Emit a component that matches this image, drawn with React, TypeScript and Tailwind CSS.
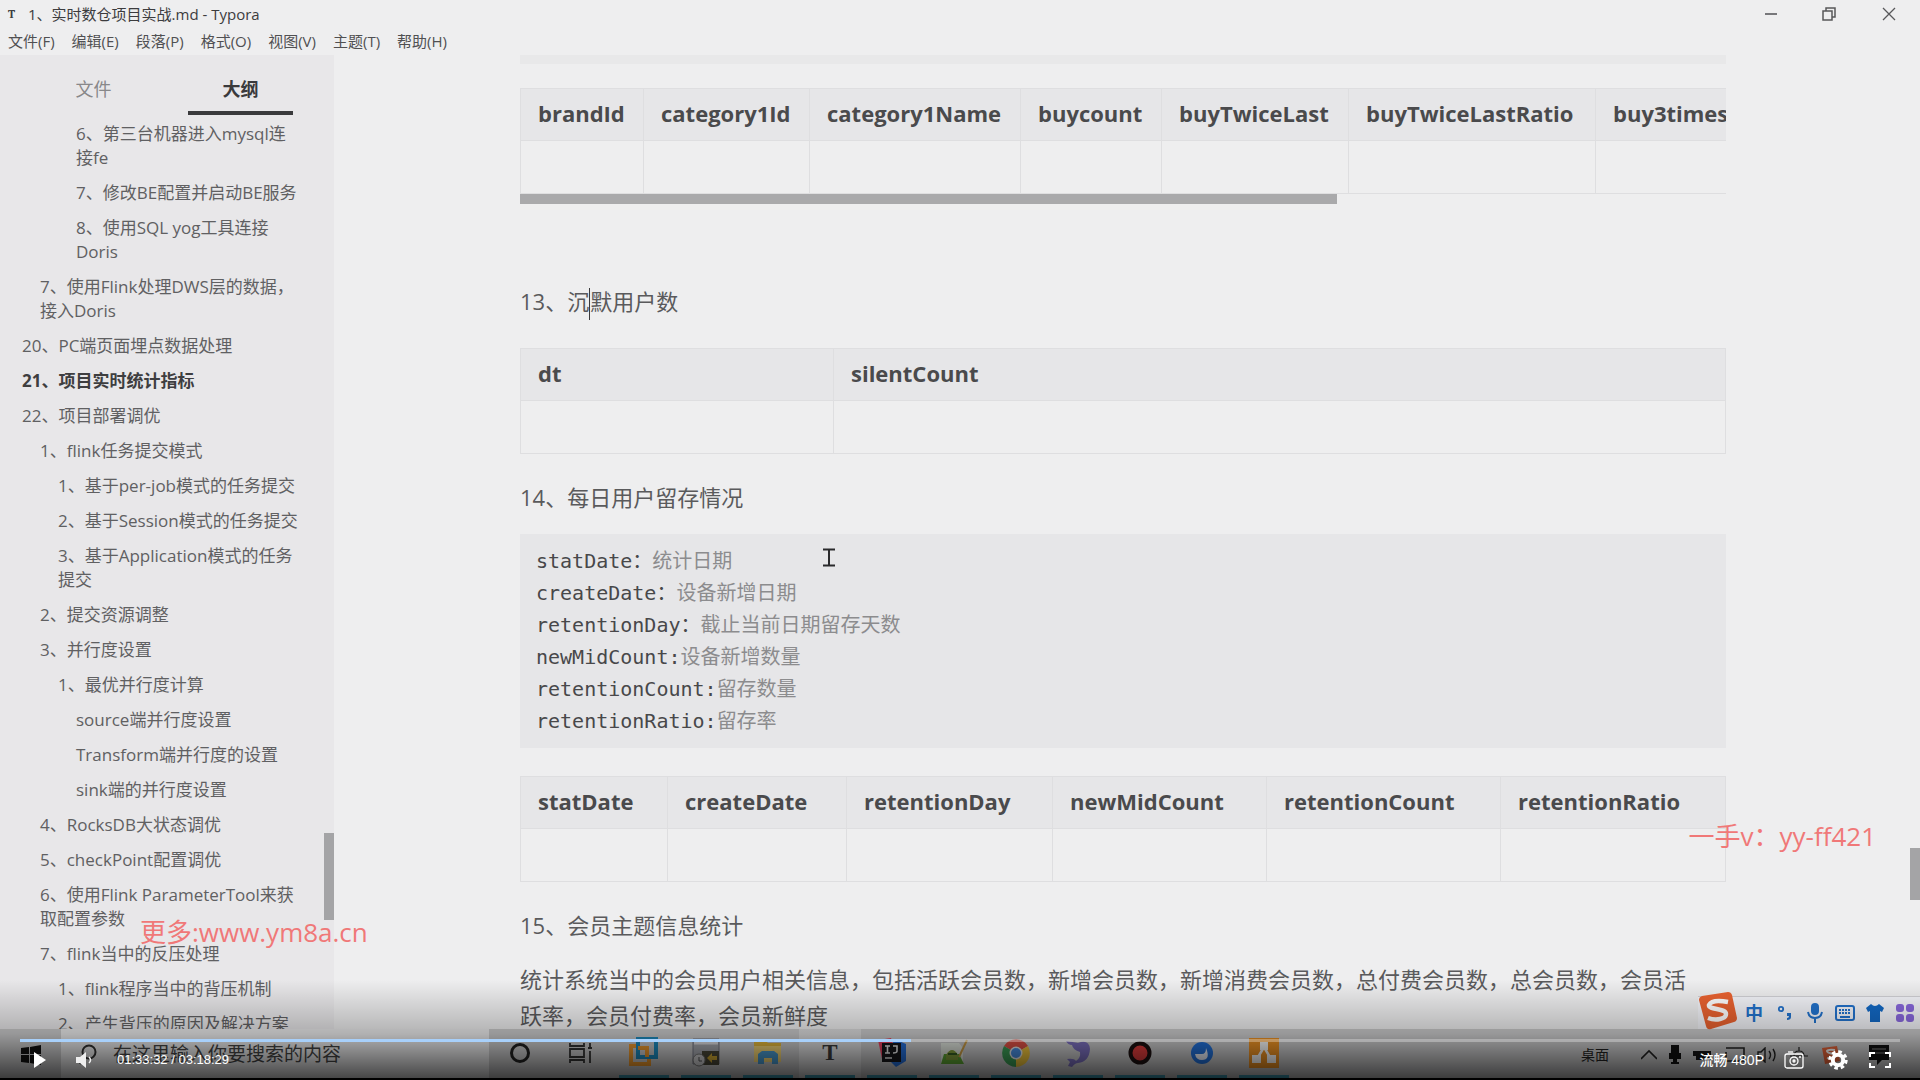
import { Fragment, type ReactNode } from "react";

type OutlineItem = {
  level: 0 | 1 | 2 | 3;
  lines: string[];
  active?: boolean;
};

type Column = {
  label: string;
  width: string;
};

const menus = ["文件(F)", "编辑(E)", "段落(P)", "格式(O)", "视图(V)", "主题(T)", "帮助(H)"];

const outline: OutlineItem[] = [
  { level: 3, lines: ["6、第三台机器进入mysql连", "接fe"] },
  { level: 3, lines: ["7、修改BE配置并启动BE服务"] },
  { level: 3, lines: ["8、使用SQL yog工具连接", "Doris"] },
  { level: 1, lines: ["7、使用Flink处理DWS层的数据，", "接入Doris"] },
  { level: 0, lines: ["20、PC端页面埋点数据处理"] },
  { level: 0, lines: ["21、项目实时统计指标"], active: true },
  { level: 0, lines: ["22、项目部署调优"] },
  { level: 1, lines: ["1、flink任务提交模式"] },
  { level: 2, lines: ["1、基于per-job模式的任务提交"] },
  { level: 2, lines: ["2、基于Session模式的任务提交"] },
  { level: 2, lines: ["3、基于Application模式的任务", "提交"] },
  { level: 1, lines: ["2、提交资源调整"] },
  { level: 1, lines: ["3、并行度设置"] },
  { level: 2, lines: ["1、最优并行度计算"] },
  { level: 3, lines: ["source端并行度设置"] },
  { level: 3, lines: ["Transform端并行度的设置"] },
  { level: 3, lines: ["sink端的并行度设置"] },
  { level: 1, lines: ["4、RocksDB大状态调优"] },
  { level: 1, lines: ["5、checkPoint配置调优"] },
  { level: 1, lines: ["6、使用Flink ParameterTool来获", "取配置参数"] },
  { level: 1, lines: ["7、flink当中的反压处理"] },
  { level: 2, lines: ["1、flink程序当中的背压机制"] },
  { level: 2, lines: ["2、产生背压的原因及解决方案"] },
];

const levelPadding = {
  0: "pl-[22px]",
  1: "pl-[40px]",
  2: "pl-[58px]",
  3: "pl-[76px]",
};

const brandColumns: Column[] = [
  { label: "brandId", width: "w-[123px]" },
  { label: "category1Id", width: "w-[166px]" },
  { label: "category1Name", width: "w-[211px]" },
  { label: "buycount", width: "w-[141px]" },
  { label: "buyTwiceLast", width: "w-[187px]" },
  { label: "buyTwiceLastRatio", width: "w-[247px]" },
  { label: "buy3timesLast", width: "w-[200px]" },
];

const silentColumns: Column[] = [
  { label: "dt", width: "w-[313px]" },
  { label: "silentCount", width: "w-auto" },
];

const retentionColumns: Column[] = [
  { label: "statDate", width: "w-[147px]" },
  { label: "createDate", width: "w-[179px]" },
  { label: "retentionDay", width: "w-[206px]" },
  { label: "newMidCount", width: "w-[214px]" },
  { label: "retentionCount", width: "w-[234px]" },
  { label: "retentionRatio", width: "w-auto" },
];

const fields = [
  ["statDate：", "统计日期"],
  ["createDate：", "设备新增日期"],
  ["retentionDay：", "截止当前日期留存天数"],
  ["newMidCount:", "设备新增数量"],
  ["retentionCount:", "留存数量"],
  ["retentionRatio:", "留存率"],
];

const DataTable = ({ columns, className }: { columns: Column[]; className: string }) => (
  <table className={`table-fixed border-collapse text-left ${className}`}>
    <thead className="bg-[#e6e6e8]">
      <tr className="h-[52px]">
        {columns.map((column) => (
          <th
            key={column.label}
            scope="col"
            className={`border border-[#dedee0] px-[17px] pb-[3px] text-[22px] font-bold whitespace-nowrap text-[#4a4a4c] ${column.width}`}
          >
            {column.label}
          </th>
        ))}
      </tr>
    </thead>
    <tbody>
      <tr className="h-[53px]">
        {columns.map((column) => (
          <td key={column.label} className="border border-[#dedee0]" />
        ))}
      </tr>
    </tbody>
  </table>
);

const TitleBar = () => (
  <header className="shrink-0 text-[#3c3c3e]">
    <div className="flex h-7 items-center justify-between pl-2">
      <div className="flex items-center gap-3 text-[15px]">
        <span className="flex h-5 w-2 items-center font-serif text-xs font-bold">T</span>
        <h1>1、实时数仓项目实战.md - Typora</h1>
      </div>
      <div className="flex">
        <button aria-label="最小化" className="flex h-7 w-[58px] items-center justify-center">
          <svg className="h-3 w-3" viewBox="0 0 12 12" stroke="#77777a" strokeWidth="2">
            <path d="M0 6h12" />
          </svg>
        </button>
        <button aria-label="还原" className="flex h-7 w-[58px] items-center justify-center">
          <svg className="h-[14px] w-[14px]" viewBox="0 0 14 14" fill="none" stroke="#58585a" strokeWidth="1.5">
            <path d="M1 4h9v9H1zM4 4V1h9v9h-3" />
          </svg>
        </button>
        <button aria-label="关闭" className="flex h-7 w-[62px] items-center justify-center">
          <svg className="h-[14px] w-[14px]" viewBox="0 0 14 14" stroke="#58585a" strokeWidth="1.3">
            <path d="M1 1l12 12M13 1L1 13" />
          </svg>
        </button>
      </div>
    </div>
    <nav className="flex h-[27px] items-center gap-[17px] pl-2 text-[15px] text-[#505052]">
      {menus.map((menu) => (
        <button key={menu}>{menu}</button>
      ))}
    </nav>
  </header>
);

const Sidebar = () => (
  <aside className="relative w-[334px] shrink-0 overflow-hidden bg-[#e8e7e9] text-[17px] text-[#606062]">
    <div className="flex px-[41px] pt-[11px] text-lg">
      <button className="h-[49px] w-[105px] pb-1 text-[#88888a]">文件</button>
      <button className="ml-[42px] h-[49px] w-[105px] border-b-[4px] border-[#3a3a3c] font-bold text-[#3a3a3c]">
        大纲
      </button>
    </div>
    <ul className="mt-[7px] space-y-[11px] leading-6 whitespace-nowrap">
      {outline.map((item) => (
        <li key={item.lines[0]} className={levelPadding[item.level]}>
          <a href="#" className={`block ${item.active ? "font-bold text-[#3e3e40]" : ""}`}>
            {item.lines.map((line, index) => (
              <Fragment key={line}>
                {index > 0 && <br />}
                {line}
              </Fragment>
            ))}
          </a>
        </li>
      ))}
    </ul>
    <div className="absolute top-[778px] right-0 h-[87px] w-[10px] bg-[#a4a4a6]" />
  </aside>
);

const Editor = () => (
  <main className="relative min-w-0 flex-1 overflow-hidden pr-[194px] pl-[186px] text-[22px] leading-9 text-[#5a5a5c]">
    <div className="h-[9px] bg-[#e8e8e9]" />

    <div className="mt-6 overflow-hidden">
      <DataTable columns={brandColumns} className="w-[1275px]" />
      <div className="h-[10px] w-[817px] max-w-full bg-[#a9a9ab]" />
    </div>

    <p className="mt-[79px]">
      13、沉
      <span className="inline-block h-8 w-px bg-[#3a3a3c] align-middle" />
      默用户数
    </p>
    <DataTable columns={silentColumns} className="mt-7 w-full" />

    <p className="mt-[25px]">14、每日用户留存情况</p>
    <div className="relative mt-[19px]">
      <pre className="bg-[#e6e6e8] px-4 py-[11px] font-['DejaVu_Sans_Mono','Noto_Sans_CJK_SC',monospace] text-xl leading-8 text-[#48484a]">
        {fields.map(([name, description]) => (
          <div key={name}>
            {name}
            <span className="text-[#8c8c8e]">{description}</span>
          </div>
        ))}
      </pre>
      <svg
        className="absolute top-[14px] left-[303px] h-[19px] w-3"
        viewBox="0 0 12 19"
        fill="none"
        stroke="#2a2a2c"
        strokeWidth="2"
      >
        <path d="M0 1.5h12M0 17.5h12M6 1v17" />
      </svg>
    </div>

    <DataTable columns={retentionColumns} className="mt-7 w-full" />

    <p className="mt-[25px]">15、会员主题信息统计</p>
    <p className="mt-[18px]">
      统计系统当中的会员用户相关信息，包括活跃会员数，新增会员数，新增消费会员数，总付费会员数，总会员数，会员活
      <br />
      跃率，会员付费率，会员新鲜度
    </p>
    <div className="absolute top-[793px] right-0 h-[52px] w-[10px] bg-[#a4a4a6]" />
  </main>
);

const AppIcon = ({ children }: { children: ReactNode }) => (
  <svg className="h-8 w-8" viewBox="0 0 32 32" fill="none">
    {children}
  </svg>
);

const taskIcons: { name: string; running: boolean; icon: ReactNode }[] = [
  {
    name: "Cortana",
    running: false,
    icon: <circle cx="16" cy="16" r="8.5" stroke="#222" strokeWidth="3" />,
  },
  {
    name: "任务视图",
    running: false,
    icon: (
      <path
        d="M4 6v3h14V6M4 26v-3h14v3M4 12h14v8H4zM24 6v4M24 14v12M22 11h4"
        stroke="#333"
        strokeWidth="1.8"
      />
    ),
  },
  {
    name: "VMware",
    running: true,
    icon: (
      <g strokeWidth="4">
        <path d="M12 9H3v18h18v-8" stroke="#f09a2c" />
        <path d="M10 2h18v18H10z" stroke="#1e8cc0" />
        <path d="M10 11h9v9" stroke="#f09a2c" />
      </g>
    ),
  },
  {
    name: "远程终端",
    running: true,
    icon: (
      <>
        <path d="M3 2h26v25H3z" fill="#a9abb2" stroke="#777985" />
        <path d="M4 6h24" stroke="#e0e0e4" strokeWidth="3" />
        <path d="M12 14h17v14H12z" fill="#4a4838" />
        <path d="M17 21l5-5v3h5v4h-5v3z" fill="#cfa832" />
        <circle cx="9" cy="23" r="6" fill="#d0d0d2" stroke="#777" />
        <path d="M9 20v4h3" stroke="#555" />
      </>
    ),
  },
  {
    name: "文件资源管理器",
    running: true,
    icon: (
      <>
        <path d="M2 3h11l3 3h13v19H2z" fill="#e5b93c" />
        <path d="M2 9h27v16H2z" fill="#f5d675" />
        <path d="M6 27V17l4-3h12l4 3v10h-6v-6h-8v6z" fill="#4a9bd0" />
      </>
    ),
  },
  {
    name: "Typora",
    running: true,
    icon: (
      <text x="16" y="23" textAnchor="middle" fontSize="23" fontWeight="bold" fontFamily="Liberation Serif, serif" fill="#3a3a3a">
        T
      </text>
    ),
  },
  {
    name: "IntelliJ IDEA",
    running: true,
    icon: (
      <>
        <path d="M2 3l13-2 5 14-14 7z" fill="#e8415e" />
        <path d="M18 2l12 5v17l-10 6-8-8z" fill="#2470dc" />
        <path d="M6 6h19v19H6z" fill="#17171a" />
        <path d="M9 9h5M11.5 9v7M9 16h5M17 9h4v5q0 2-4 2M9 21h7" stroke="#eee" strokeWidth="1.6" />
      </>
    ),
  },
  {
    name: "Notepad++",
    running: true,
    icon: (
      <>
        <path d="M3 6h18l4 5v15H3z" fill="#e2e7df" />
        <path d="M3 27l3-10h15l5 10z" fill="#5da634" />
        <path d="M8 18q6-10 12 0v5H8z" fill="#839f3c" />
        <path d="M10 17h9" stroke="#365f23" strokeWidth="2" />
        <path d="M29 3l-8 17" stroke="#c99b45" strokeWidth="2" />
      </>
    ),
  },
  {
    name: "Google Chrome",
    running: true,
    icon: (
      <>
        <path d="M16 16L4 9a14 14 0 0 1 24 0z" fill="#df5044" />
        <path d="M16 16L28 9a14 14 0 0 1-12 21z" fill="#f2c63c" />
        <path d="M16 16v14A14 14 0 0 1 4 9z" fill="#3c9e56" />
        <circle cx="16" cy="16" r="6.5" fill="#e9e9e9" />
        <circle cx="16" cy="16" r="5" fill="#4a8fe4" />
      </>
    ),
  },
  {
    name: "海豚数据库",
    running: true,
    icon: (
      <path
        d="M4 4q7 1 12 2 11-4 12 6-1 13-12 14-3 0-6 4l-4-1 2-4-3-3q7-1 9 2 5-3 4-9-7-2-8-7-4 0-6-4z"
        fill="#7c70c0"
      />
    ),
  },
  {
    name: "录屏",
    running: true,
    icon: <circle cx="16" cy="16" r="9.5" fill="#e23c3c" stroke="#1c1010" strokeWidth="4" />,
  },
  {
    name: "会议",
    running: true,
    icon: (
      <>
        <circle cx="16" cy="16" r="11" fill="#2272dc" />
        <path d="M9 17h7q4 0 4-6 5 12-4 12-6 0-7-6z" fill="#eef4ff" />
      </>
    ),
  },
  {
    name: "draw.io",
    running: true,
    icon: (
      <>
        <path d="M1 1h30v30H1z" fill="#f09424" />
        <path d="M16 10L9 22M16 10l7 12" stroke="#fff" strokeWidth="2.5" />
        <path d="M12 5h8v8h-8zM4 18h9v8H4zM19 18h9v8h-9z" fill="#fff" />
      </>
    ),
  },
];

const Taskbar = () => (
  <div className="flex h-[51px] shrink-0 items-stretch bg-[#cacacb]">
    <button aria-label="开始" className="flex w-[61px] items-center justify-center">
      <svg className="h-5 w-5" viewBox="0 0 20 20" fill="#111">
        <path d="M0 3l8-1v7H0zM9 2l11-2v9H9zM0 10h8v8l-8-1zM9 10h11v10L9 18z" />
      </svg>
    </button>
    <label className="flex w-[428px] items-center gap-4 bg-[#ececed] pl-[18px]">
      <svg className="h-[22px] w-[18px] shrink-0" viewBox="0 0 18 22" fill="none" stroke="#333" strokeWidth="2">
        <circle cx="10" cy="8" r="6.5" />
        <path d="M5 13l-4 7" />
      </svg>
      <span className="sr-only">搜索</span>
      <input
        className="min-w-0 flex-1 bg-transparent text-[19px] text-[#444] outline-none placeholder:text-[#444]"
        placeholder="在这里输入你要搜索的内容"
      />
    </label>
    <div className="flex flex-1">
      {taskIcons.map((task) => (
        <button
          key={task.name}
          aria-label={task.name}
          className={`flex w-[62px] flex-col items-center justify-between pt-2 ${
            task.name === "Typora" ? "bg-[#dcdcdd]" : ""
          }`}
        >
          <AppIcon>{task.icon}</AppIcon>
          <span className={`h-[5px] w-[50px] ${task.running ? "bg-[#3f9fb8]" : ""}`} />
        </button>
      ))}
    </div>
    <div className="flex items-center gap-3 pr-[31px] text-sm text-[#222]">
      <span className="mr-5">桌面</span>
      <svg className="h-4 w-4" viewBox="0 0 16 16" fill="none" stroke="#222" strokeWidth="1.6">
        <path d="M0 12l8-8 8 8" />
      </svg>
      <svg className="h-5 w-3" viewBox="0 0 12 20" fill="#111">
        <path d="M2 0h8v10H2zM0 8h12v6H8v3h2v2H2v-2h2v-3H0z" />
      </svg>
      <svg className="h-3 w-5" viewBox="0 0 20 12" fill="#151515">
        <path d="M0 2h18v9H3V7H0z" />
      </svg>
      <svg className="h-4 w-5" viewBox="0 0 20 16" fill="none" stroke="#222" strokeWidth="1.6">
        <path d="M1 1h18v13H5M1 5v9h6" />
      </svg>
      <svg className="h-4 w-5" viewBox="0 0 20 16" fill="none" stroke="#222" strokeWidth="1.4">
        <path d="M1 5h3l4-4v14l-4-4H1zM12 4q3 4 0 8M16 2q4 6 0 12" />
      </svg>
      <svg className="h-4 w-5" viewBox="0 0 20 16" fill="none" stroke="#222" strokeWidth="1.2">
        <path d="M1 9h18M5 9q0-5 5-5t5 5M10 0v4" />
      </svg>
      <svg className="h-5 w-5" viewBox="0 0 20 20" fill="none">
        <path d="M1 3l15-2 3 15-15 3z" fill="#e8653a" />
        <path d="M14 5q-7-1-8 1c0 3 8 2 8 5 0 2-4 3-8 2" stroke="#fff" strokeWidth="2" />
      </svg>
      <svg className="ml-4 h-5 w-5" viewBox="0 0 20 20">
        <path d="M0 0h20v15h-7l-5 5v-5H0z" fill="#111" />
        <path d="M3 4h14M3 8h14" stroke="#888" />
      </svg>
    </div>
  </div>
);

const InputMethodBar = () => (
  <div className="absolute right-0 bottom-[51px] flex h-[33px] w-[222px] items-center border-t border-[#d0d0d4] bg-[#f4f5fa] pl-[42px]">
    <svg className="absolute -top-[5px] left-0 h-10 w-10" viewBox="0 0 40 40">
      <path d="M1 8q0-3 3-4L30 0q3 0 4 3l5 23q0 3-3 4L13 37q-4 1-5-3z" fill="#ea6230" />
      <path
        d="M30 10q-16-3-19 3c-1 5 17 3 17 9 0 5-10 7-18 4"
        fill="none"
        stroke="#fff"
        strokeWidth="4.5"
      />
    </svg>
    <span className="w-7 text-center text-lg font-bold text-[#2272cc]">中</span>
    <svg className="ml-[7px] h-4 w-5" viewBox="0 0 20 16" fill="#2272cc">
      <circle cx="6" cy="4" r="2.2" fill="none" stroke="#2272cc" strokeWidth="1.8" />
      <path d="M12 8h4v4q0 3-4 3v-2q2 0 2-2h-2z" />
    </svg>
    <svg className="ml-3 h-5 w-4" viewBox="0 0 16 20" fill="none" stroke="#2272cc" strokeWidth="2">
      <rect x="5" y="1" width="6" height="10" rx="3" fill="#2272cc" />
      <path d="M1 9q1 6 7 6t7-6M8 15v5" />
    </svg>
    <svg className="ml-3 h-4 w-5" viewBox="0 0 20 16" fill="none" stroke="#2272cc" strokeWidth="2">
      <rect x="1" y="1" width="18" height="14" rx="2" />
      <path d="M4 5h12M4 8h12" strokeDasharray="2 1" />
      <path d="M5 12h10" />
    </svg>
    <svg className="ml-[11px] h-[18px] w-[18px]" viewBox="0 0 18 18" fill="#1268c4">
      <path d="M0 4l5-4q4 4 8 0l5 4-2 4-2-1v11H4V7L2 8z" />
    </svg>
    <svg className="ml-3 h-[18px] w-[18px]" viewBox="0 0 18 18" fill="#8868dc">
      <rect width="8" height="8" rx="3" />
      <rect x="10" width="8" height="8" rx="3" />
      <rect y="10" width="8" height="8" rx="3" />
      <rect x="10" y="10" width="8" height="8" rx="3" />
    </svg>
  </div>
);

const PlayerControls = () => (
  <footer className="absolute inset-x-0 bottom-0 flex h-[100px] flex-col justify-end border-b-2 border-black bg-linear-to-b from-black/0 via-black/25 via-55% to-black/70 px-5">
    <div className="h-[3px] bg-white/30" role="progressbar" aria-label="播放进度" aria-valuenow={47}>
      <div className="h-full bg-[#a8d0fa]" style={{ width: `${(891 / 1880) * 100}%` }} />
    </div>
    <div className="flex h-9 items-center justify-between pl-[14px] text-[13px] text-white">
      <div className="flex items-center">
        <button aria-label="播放">
          <svg className="h-4 w-3" viewBox="0 0 12 16" fill="#fff">
            <path d="M0 0l12 8-12 8z" />
          </svg>
        </button>
        <button aria-label="音量" className="ml-[30px]">
          <svg className="h-4 w-4" viewBox="0 0 16 16" fill="#eee">
            <path d="M0 5h4l6-5v16l-6-5H0z" />
            <path d="M13 5q3 3 0 6" fill="none" stroke="#eee" strokeWidth="1.5" />
          </svg>
        </button>
        <span className="ml-[25px]">01:33:32 / 03:18:29</span>
      </div>
      <div className="flex items-center pr-[9px]">
        <button className="text-sm font-medium">流畅 480P</button>
        <button aria-label="截图" className="ml-5">
          <svg className="h-[18px] w-5" viewBox="0 0 20 18" fill="none" stroke="#fff" strokeWidth="1.3">
            <rect x="1" y="3" width="18" height="14" rx="2" />
            <circle cx="10" cy="10" r="4" />
            <path d="M4 1h5" />
            <circle cx="10" cy="10" r="1" />
            <path d="M15 6h2" />
          </svg>
        </button>
        <button aria-label="设置" className="ml-6">
          <svg className="h-5 w-5" viewBox="0 0 20 20" fill="none">
            <circle cx="10" cy="10" r="5.2" stroke="#fff" strokeWidth="4" />
            <circle cx="10" cy="10" r="8.2" stroke="#fff" strokeWidth="3" strokeDasharray="3.6 2.84" />
          </svg>
        </button>
        <button aria-label="全屏" className="ml-[21px]">
          <svg className="h-4 w-[22px]" viewBox="0 0 22 16" fill="none" stroke="#fff" strokeWidth="2">
            <path d="M1 5V1h5M16 1h5v4M21 11v4h-5M6 15H1v-4" />
          </svg>
        </button>
      </div>
    </div>
  </footer>
);

const App = () => (
  <div className="relative flex h-screen flex-col overflow-hidden bg-[#eeeeef] font-['Open_Sans','Noto_Sans_CJK_SC',sans-serif]">
    <TitleBar />
    <div className="flex min-h-0 flex-1">
      <Sidebar />
      <Editor />
    </div>
    <Taskbar />
    <InputMethodBar />

    <p className="absolute bottom-[130px] left-[140px] text-[26px] leading-9 text-[#f07878]">更多:www.ym8a.cn</p>
    <p className="absolute right-[44px] bottom-[226px] text-[26px] leading-9 text-[#f07878]">一手v：yy-ff421</p>

    <div className="font-['Liberation_Sans','Noto_Sans_CJK_SC',sans-serif]">
      <PlayerControls />
    </div>
  </div>
);

export default App;
